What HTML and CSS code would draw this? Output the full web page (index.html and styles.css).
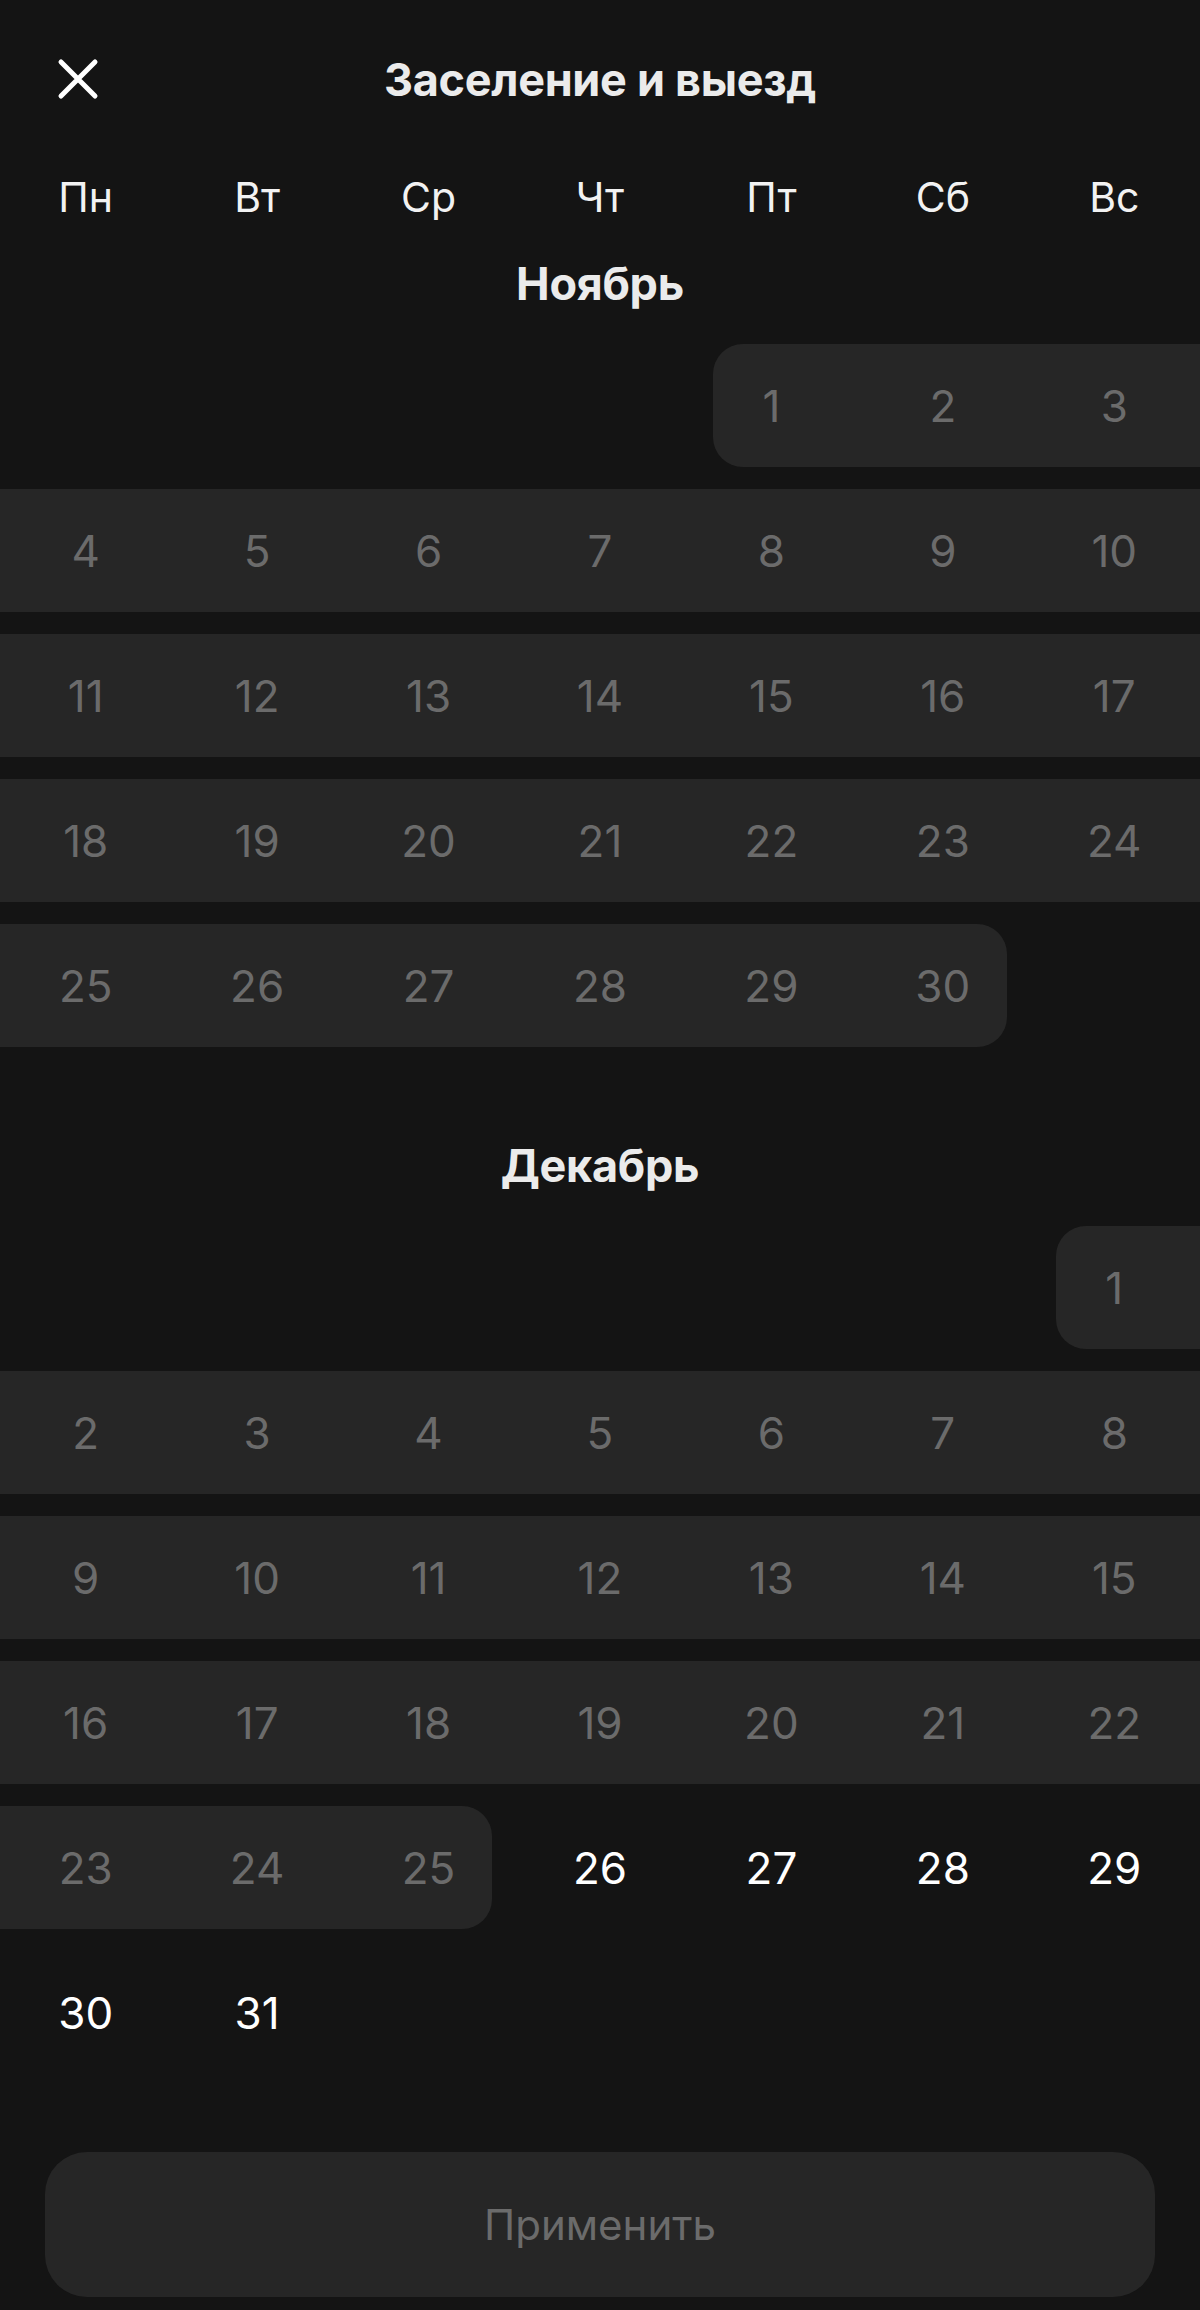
FILE: index.html
```html
<!DOCTYPE html>
<html lang="ru">
<head>
  <meta charset="UTF-8" />
  <meta name="viewport" content="width=device-width, initial-scale=1.0"/>
  <title>Заселение и выезд</title>
  <link rel="stylesheet" href="styles.css">
</head>
<body>

  <div class="sheet">
    <header class="header">
      <button class="close" aria-label="Закрыть">
        <svg width="44" height="44" viewBox="0 0 44 44">
          <path d="M5 5 L39 39 M39 5 L5 39" stroke="#fff" stroke-width="5" stroke-linecap="round" fill="none"/>
        </svg>
      </button>
      <h1>Заселение и выезд</h1>
    </header>

    <div class="weekdays">
      <span>Пн</span><span>Вт</span><span>Ср</span><span>Чт</span><span>Пт</span><span>Сб</span><span>Вс</span>
    </div>

    <!-- November -->
    <section class="month">
      <h2 class="month-title">Ноябрь</h2>
      <div class="weeks">
        <div class="week">
          <div></div><div></div><div></div><div></div>
          <div class="band span-3 cap-start">
            <div class="band-days"><div class="day">1</div><div class="day">2</div><div class="day">3</div></div>
          </div>
        </div>
        <div class="week">
          <div class="band span-7">
            <div class="band-days"><div class="day">4</div><div class="day">5</div><div class="day">6</div><div class="day">7</div><div class="day">8</div><div class="day">9</div><div class="day">10</div></div>
          </div>
        </div>
        <div class="week">
          <div class="band span-7">
            <div class="band-days"><div class="day">11</div><div class="day">12</div><div class="day">13</div><div class="day">14</div><div class="day">15</div><div class="day">16</div><div class="day">17</div></div>
          </div>
        </div>
        <div class="week">
          <div class="band span-7">
            <div class="band-days"><div class="day">18</div><div class="day">19</div><div class="day">20</div><div class="day">21</div><div class="day">22</div><div class="day">23</div><div class="day">24</div></div>
          </div>
        </div>
        <div class="week">
          <div class="band span-6 cap-end">
            <div class="band-days"><div class="day">25</div><div class="day">26</div><div class="day">27</div><div class="day">28</div><div class="day">29</div><div class="day">30</div></div>
          </div>
        </div>
      </div>
    </section>

    <!-- December -->
    <section class="month month-next">
      <h2 class="month-title">Декабрь</h2>
      <div class="weeks">
        <div class="week">
          <div></div><div></div><div></div><div></div><div></div><div></div>
          <div class="band span-1 cap-start">
            <div class="band-days"><div class="day">1</div></div>
          </div>
        </div>
        <div class="week">
          <div class="band span-7">
            <div class="band-days"><div class="day">2</div><div class="day">3</div><div class="day">4</div><div class="day">5</div><div class="day">6</div><div class="day">7</div><div class="day">8</div></div>
          </div>
        </div>
        <div class="week">
          <div class="band span-7">
            <div class="band-days"><div class="day">9</div><div class="day">10</div><div class="day">11</div><div class="day">12</div><div class="day">13</div><div class="day">14</div><div class="day">15</div></div>
          </div>
        </div>
        <div class="week">
          <div class="band span-7">
            <div class="band-days"><div class="day">16</div><div class="day">17</div><div class="day">18</div><div class="day">19</div><div class="day">20</div><div class="day">21</div><div class="day">22</div></div>
          </div>
        </div>
        <div class="week">
          <div class="band span-3 cap-end">
            <div class="band-days"><div class="day">23</div><div class="day">24</div><div class="day">25</div></div>
          </div>
          <div class="day">26</div><div class="day">27</div><div class="day">28</div><div class="day">29</div>
        </div>
        <div class="week">
          <div class="day">30</div><div class="day">31</div>
        </div>
      </div>
    </section>

    <button class="apply" disabled>Применить</button>
  </div>

</body>
</html>
```

FILE: styles.css
```css
body {
  font-family: Inter, "Noto Sans", sans-serif;
  background: #141414;
  color: #fff;
  margin: 0;
  overflow: hidden;
}
.sheet {
  width: 1200px;
  height: 2310px;
}
.header {
  display: grid;
  grid-template-columns: 1fr auto 1fr;
  align-items: center;
  height: 158px;
}
.close {
  justify-self: start;
  margin-left: 56px;
  padding: 0;
  width: 44px;
  height: 44px;
  background: none;
  border: none;
  cursor: pointer;
}
.close svg {
  display: block;
}
h1 {
  margin: 0;
  font-size: 45px;
  font-weight: 700;
  color: #ebebeb;
  letter-spacing: -0.3px;
}
.weekdays {
  display: grid;
  grid-template-columns: repeat(7, 1fr);
  height: 78px;
  align-items: center;
  text-align: center;
  font-size: 41px;
  color: #f2f2f2;
}
.month-title {
  margin: 0;
  height: 94px;
  display: flex;
  align-items: center;
  justify-content: center;
  font-size: 45px;
  font-weight: 700;
  color: #ebebeb;
  letter-spacing: -0.3px;
}
.month-next {
  margin-top: 71px;
}
.weeks {
  display: grid;
  row-gap: 22px;
  padding-top: 14px;
}
.week {
  display: grid;
  grid-template-columns: repeat(7, 1fr);
  height: 123px;
}
.day {
  display: flex;
  align-items: center;
  justify-content: center;
  height: 123px;
  font-size: 44px;
  color: #fff;
}
.band {
  background: #262626;
}
.band-days {
  display: flex;
}
.band .day {
  flex: 1;
  color: #6b6b6b;
}
.span-1 { grid-column: span 1; }
.span-3 { grid-column: span 3; }
.span-6 { grid-column: span 6; }
.span-7 { grid-column: span 7; }
.cap-start {
  margin-left: 27px;
  border-top-left-radius: 30px;
  border-bottom-left-radius: 30px;
}
.cap-start .band-days {
  margin-left: -27px;
}
.cap-end {
  margin-right: 22px;
  border-top-right-radius: 30px;
  border-bottom-right-radius: 30px;
}
.cap-end .band-days {
  margin-right: -22px;
}
.apply {
  display: block;
  width: 1110px;
  height: 145px;
  margin: 78px 45px 0;
  border: none;
  border-radius: 42px;
  background: #262626;
  color: #6b6b6b;
  font-family: inherit;
  font-size: 42px;
}
```
